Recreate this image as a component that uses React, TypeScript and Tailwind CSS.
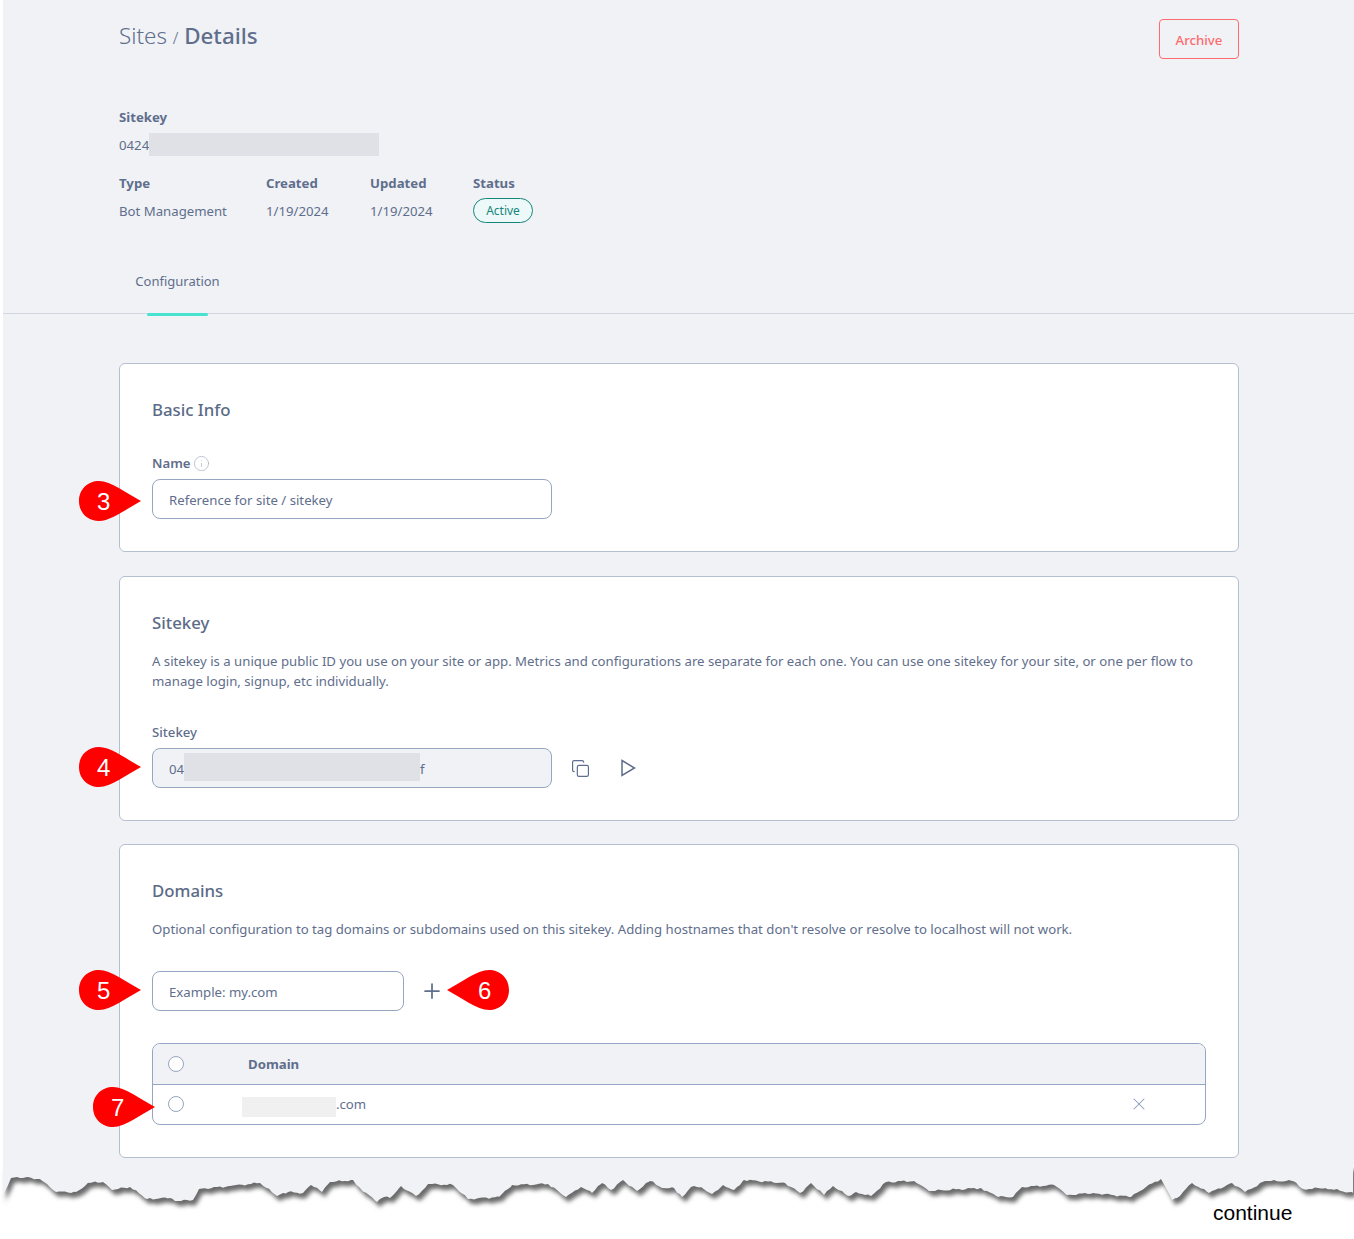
import React from 'react'
import { Copy, Plus, X, Info } from 'lucide-react'

// torn paper edge, y values relative to the top of the svg (page y 1165)
const tornTop = 1165
const edge: [number, number][] = [
  [2,1197],[11,1178],[28,1177],[41,1180],[56,1192],[76,1192],[89,1183],[103,1182],[112,1190],[130,1187],[147,1199],[169,1198],[178,1201],[193,1200],[199,1189],[230,1186],[260,1183],[277,1196],[288,1192],[303,1193],[311,1185],[322,1192],[330,1182],[353,1180],[360,1188],[377,1202],[384,1197],[390,1198],[401,1186],[416,1196],[429,1184],[453,1185],[468,1199],[499,1197],[512,1185],[548,1184],[566,1197],[581,1187],[592,1193],[602,1183],[611,1190],[623,1180],[637,1191],[650,1181],[663,1188],[674,1188],
  [682,1197],[691,1187],[701,1187],[712,1194],[723,1185],[734,1190],[744,1180],[785,1183],[800,1193],[811,1183],[824,1195],[833,1186],[848,1196],[856,1192],[871,1196],[886,1182],[914,1181],[929,1191],[981,1188],[998,1197],[1013,1197],[1022,1187],[1054,1185],[1067,1195],[1093,1193],[1131,1197],[1146,1187],[1161,1179],[1172,1200],[1177,1198],[1192,1183],[1209,1193],[1232,1183],[1245,1192],[1265,1181],[1293,1181],[1303,1189],[1325,1188],[1353,1193],
]

const tornPath = () => {
  let d = `M3 0 L3 ${edge[0][1] - tornTop}`
  edge.forEach(([x, y], i) => {
    if (i > 0) {
      const [px, py] = edge[i - 1]
      // small zigzag so the edge looks ragged
      for (let s = px + 3; s < x; s += 3) {
        const t = (s - px) / (x - px)
        const j = Math.sin(s * 1.7) * 0.7 + Math.cos(s * 0.9) * 0.4
        d += ` L${s} ${(py + (y - py) * t + j - tornTop).toFixed(1)}`
      }
    }
    d += ` L${x} ${y - tornTop}`
  })
  return d + ' L1353 0 Z'
}

const Balloon = ({ n, flip }: { n: number; flip?: boolean }) => (
  <div className="relative w-[62px] h-10">
    <svg width="62" height="40" viewBox="0 0 62 40" className={flip ? 'block -scale-x-100' : 'block'}>
      <path d="M0 20 C0 8 9 0 20 0 C32 0 47 12 62 20 C47 28 32 40 20 40 C9 40 0 32 0 20 Z" fill="#fe0000" />
    </svg>
    <span className={`absolute top-[6px] text-[24px] leading-[30px] text-white font-['Liberation_Sans',sans-serif] ${flip ? 'left-[31px]' : 'left-[18px]'}`}>{n}</span>
  </div>
)

const Radio = () => <div className="w-4 h-4 rounded-full border border-[#97a6c0] bg-white" />

const Card = ({ title, children }: { title: string; children: React.ReactNode }) => (
  <section className="bg-white border border-[#b4bfd0] rounded-md px-8 pt-[33px]">
    <h2 className="text-[16.8px] leading-[26px] font-medium text-[#5b6b87]">{title}</h2>
    {children}
  </section>
)

export default function App() {
  return (
    <div className="relative w-[1354px] h-[1239px] bg-white overflow-hidden font-['Noto_Sans',sans-serif] text-[13.2px] text-[#5f6e8c]">
      <div className="ml-[3px] h-[1165px] bg-[#f0f2f6]">
        <div className="pl-[116px] pr-[115px]">
          <div className="flex justify-between pt-[19px]">
            <h1 className="text-[22.4px] leading-[34px] font-light text-[#5f6e8c]">
              Sites <span className="text-[16px]">/</span> <span className="font-medium">Details</span>
            </h1>
            <button className="w-20 h-10 pt-1 border border-[#ff6a6d] rounded text-[13.2px] font-medium text-[#ff6a6d]">Archive</button>
          </div>
          <div className="mt-[48px] font-bold leading-5">Sitekey</div>
          <div className="mt-[7px] flex items-center h-[23px]">
            0424
            <div className="w-[230px] h-[23px] mb-[2px] bg-[#dfe1e7]" />
          </div>
          <div className="flex mt-[16px]">
            <div className="w-[147px]">
              <div className="font-bold leading-5">Type</div>
              <div className="mt-2 leading-5">Bot Management</div>
            </div>
            <div className="w-[104px]">
              <div className="font-bold leading-5">Created</div>
              <div className="mt-2 leading-5">1/19/2024</div>
            </div>
            <div className="w-[103px]">
              <div className="font-bold leading-5">Updated</div>
              <div className="mt-2 leading-5">1/19/2024</div>
            </div>
            <div>
              <div className="font-bold leading-5">Status</div>
              <div className="mt-[5px] w-[60px] h-[25px] rounded-full border border-[#16857c] bg-[#ecf9f8] text-[12px] leading-[24px] text-center text-[#16857c]">Active</div>
            </div>
          </div>
        </div>

        <div className="mt-[37px] h-[54px] border-b border-[#d3d7e0] pl-[116px]">
          <div className="w-[117px] h-[54px] relative pt-[11px] text-center text-[13px] leading-5">
            Configuration
            <div className="absolute left-[28px] bottom-[-2px] w-[61px] h-[3px] rounded-sm bg-[#46e3d0]" />
          </div>
        </div>

        <div className="pl-[116px] pr-[115px] pt-[49px] flex flex-col">
          <Card title="Basic Info">
            <div className="mt-[30px] flex items-center gap-[2px] leading-5 font-semibold">
              Name <Info size={17} strokeWidth={1} className="text-[#a3b0c6]" />
            </div>
            <div className="relative mt-[6px] mb-[32px] w-[400px]">
              <div className="absolute left-[-73px] top-[2px]"><Balloon n={3} /></div>
              <input placeholder="Reference for site / sitekey" className="w-full h-10 px-4 pt-[2px] border border-[#97a6c0] rounded-lg text-[13.2px] placeholder:text-[#5f6e8c] outline-none" />
            </div>
          </Card>

          <div className="mt-6">
            <Card title="Sitekey">
              <p className="mt-[15px] leading-5 w-[1054px]">A sitekey is a unique public ID you use on your site or app. Metrics and configurations are separate for each one. You can use one sitekey for your site, or one per flow to manage login, signup, etc individually.</p>
              <div className="mt-[31px] leading-5 font-medium">Sitekey</div>
              <div className="flex items-center mt-[6px] mb-[32px]">
                <div className="relative flex items-center w-[400px] h-10 px-4 border border-[#97a6c0] rounded-lg bg-[#f0f2f6]">
                  <div className="absolute left-[-74px] top-[-2px]"><Balloon n={4} /></div>
                  <span className="mt-1">04</span>
                  <div className="w-[236px] h-7 mb-[2px] bg-[#dfe1e7]" />
                  <span className="mt-1">f</span>
                </div>
                <Copy size={19} strokeWidth={1.5} className="ml-[19px] text-[#5f6e8c]" />
                <svg width="16" height="18" viewBox="0 0 16 18" fill="none" stroke="#5f6e8c" strokeWidth="1.5" className="ml-[30px]">
                  <path d="M2 1.5 L14.5 9 L2 16.5 Z" strokeLinejoin="miter" />
                </svg>
              </div>
            </Card>
          </div>

          <div className="mt-[23px]">
            <Card title="Domains">
              <p className="mt-[15px] leading-5">Optional configuration to tag domains or subdomains used on this sitekey. Adding hostnames that don't resolve or resolve to localhost will not work.</p>
              <div className="flex items-center h-10 mt-[32px]">
                <div className="relative w-[252px]">
                  <div className="absolute left-[-73px] top-[-1px]"><Balloon n={5} /></div>
                  <input placeholder="Example: my.com" className="w-full h-10 px-4 pt-[2px] border border-[#97a6c0] rounded-lg text-[13.2px] placeholder:text-[#5f6e8c] outline-none" />
                </div>
                <Plus size={24} strokeWidth={1.75} className="ml-4 text-[#5f6e8c]" />
                <div className="ml-[3px] mb-[2px]"><Balloon n={6} flip /></div>
              </div>
              <div className="mt-8 mb-8 border border-[#97a6c0] rounded-lg">
                <div className="flex items-center h-[41px] bg-[#f0f2f6] rounded-t-lg border-b border-[#97a6c0]">
                  <div className="w-[95px] pl-[15px]"><Radio /></div>
                  <div className="font-bold pt-[2px]">Domain</div>
                </div>
                <div className="relative flex items-center h-[39px]">
                  <div className="absolute left-[-60px] top-[2px]"><Balloon n={7} /></div>
                  <div className="w-[89px] pl-[15px] mb-[2px]"><Radio /></div>
                  <div className="w-[94px] h-5 mt-[5px] bg-[#f0f0f0]" />
                  <span>.com</span>
                  <X size={20} strokeWidth={1.25} className="ml-auto mr-[56px] mb-[2px] text-[#8c9cb8]" />
                </div>
              </div>
            </Card>
          </div>
        </div>
      </div>

      <svg width="1354" height="74" viewBox="0 0 1354 74" className="block">
        <defs>
          <filter id="tornShadow" x="-2%" y="-30%" width="104%" height="180%">
            <feGaussianBlur stdDeviation="2" />
          </filter>
        </defs>
        <path d={tornPath()} fill="#6a6a6a" filter="url(#tornShadow)" transform="translate(3 5)" />
        <path d={tornPath()} fill="#f0f2f6" />
      </svg>

      <div className="absolute left-[1213px] top-[1201px] text-[21px] leading-6 text-black font-['Liberation_Sans',sans-serif]">continue</div>
    </div>
  )
}
